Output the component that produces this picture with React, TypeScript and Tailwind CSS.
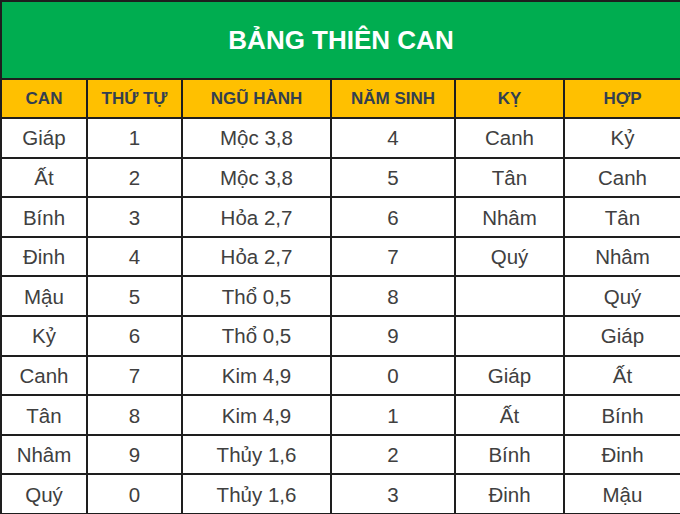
const rows: string[][] = [
  ["Giáp", "1", "Mộc 3,8", "4", "Canh", "Kỷ"],
  ["Ất", "2", "Mộc 3,8", "5", "Tân", "Canh"],
  ["Bính", "3", "Hỏa 2,7", "6", "Nhâm", "Tân"],
  ["Đinh", "4", "Hỏa 2,7", "7", "Quý", "Nhâm"],
  ["Mậu", "5", "Thổ 0,5", "8", "", "Quý"],
  ["Kỷ", "6", "Thổ 0,5", "9", "", "Giáp"],
  ["Canh", "7", "Kim 4,9", "0", "Giáp", "Ất"],
  ["Tân", "8", "Kim 4,9", "1", "Ất", "Bính"],
  ["Nhâm", "9", "Thủy 1,6", "2", "Bính", "Đinh"],
  ["Quý", "0", "Thủy 1,6", "3", "Đinh", "Mậu"],
];

const headers = ["CAN", "THỨ TỰ", "NGŨ HÀNH", "NĂM SINH", "KỴ", "HỢP"];
const widths = ["w-[86px]", "w-[95px]", "w-[149px]", "w-[124px]", "w-[109px]", "w-[117px]"];

export default function App() {
  return (
    <div className="w-[680px] h-[514px] bg-white overflow-hidden font-['Liberation_Sans',Arial,sans-serif]">
      <table className="w-[680px] table-fixed border-collapse">
        <colgroup>
          {widths.map((w, i) => (
            <col key={i} className={w} />
          ))}
        </colgroup>
        <thead>
          <tr className="h-[78px]">
            <th
              colSpan={6}
              className="bg-[#00ad50] border-2 border-[#1e1e1e] text-white text-[26px] font-bold text-center"
            >
              BẢNG THIÊN CAN
            </th>
          </tr>
          <tr className="h-[39px]">
            {headers.map((h) => (
              <th
                key={h}
                className="bg-[#ffc000] border-2 border-[#1e1e1e] text-[#333f50] text-[17px] font-bold text-center pt-[1px]"
              >
                {h}
              </th>
            ))}
          </tr>
        </thead>
        <tbody>
          {rows.map((r, i) => (
            <tr key={i} className="h-[39.6px]">
              {r.map((c, j) => (
                <td
                  key={j}
                  className="border-2 border-[#1e1e1e] text-[#404040] text-[20.5px] text-center p-0 pt-[2px]"
                >
                  {c}
                </td>
              ))}
            </tr>
          ))}
        </tbody>
      </table>
    </div>
  );
}
